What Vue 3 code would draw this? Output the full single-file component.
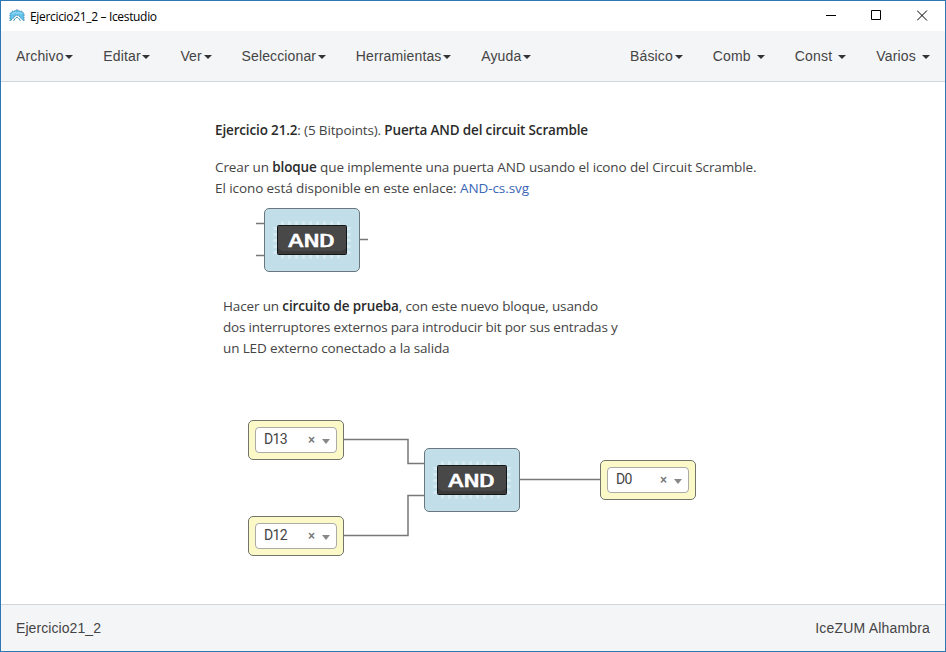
<script setup>
const leftMenus = ['Archivo', 'Editar', 'Ver', 'Seleccionar', 'Herramientas', 'Ayuda']
const rightMenus = [
  { label: 'Básico', spaced: false },
  { label: 'Comb', spaced: true },
  { label: 'Const', spaced: true },
  { label: 'Varios', spaced: true },
]
const gates = [
  { id: 'sample', x: 263, y: 126 },
  { id: 'circuit', x: 423, y: 366 },
]
const ports = [
  { pin: 'D13', x: 247, y: 338 },
  { pin: 'D12', x: 247, y: 434 },
  { pin: 'D0', x: 599, y: 378 },
]
const at = (n) => ({ left: n.x + 'px', top: n.y + 'px' })
const topPins = [9, 16, 23, 30, 37, 44, 51, 58, 65]
const sidePins = [7, 13, 19, 25, 31]
</script>

<template>
  <div class="window">
    <header class="titlebar">
      <svg class="app-icon" width="16" height="14" viewBox="0 0 16 14">
        <path d="M1 4.500 3.500 2h2L7 1h2l1.500 1h2L15 4.500V12l-3.500-3L10.500 7.500 8 6 5.500 7.500 4.500 9 1 12z" fill="#63c2ea" stroke="#4585a8" stroke-width="1" stroke-dasharray="1.500 1" />
        <path d="M3 5 6 3.500l2 1 2-1L13 5" fill="none" stroke="#a5e0f8" />
        <path d="m4.500 12 2-3M11.500 12l-2-3M7 8.500h2" stroke="#4c9fc9" />
      </svg>
      <span class="title">Ejercicio21_2 – Icestudio</span>
      <div class="controls">
        <svg width="10" height="11" viewBox="0 0 10 11"><path d="M0 5.500h10" stroke="#000" /></svg>
        <svg width="11" height="11" viewBox="0 0 11 11"><path d="M.5.5h9v9H.5z" fill="none" stroke="#000" /></svg>
        <svg width="11" height="11" viewBox="0 0 11 11"><path d="m0 .5 10 10m0-10-10 10" stroke="#000" /></svg>
      </div>
    </header>

    <nav class="menubar">
      <div class="group">
        <span v-for="m in leftMenus" :key="m" class="menu">{{ m }}<i class="caret" /></span>
      </div>
      <div class="group right">
        <span v-for="m in rightMenus" :key="m.label" class="menu" :class="{ spaced: m.spaced }">{{ m.label }}<i class="caret" /></span>
      </div>
    </nav>

    <main class="canvas">
      <svg class="wires" width="944" height="522" viewBox="0 0 944 522">
        <g fill="none" stroke="#777" stroke-width="1.500">
          <path d="M255 141.500h9M255 173.500h9M358 157.500h9" />
          <path d="M342 357.500h65v24h17M342 453.500h65v-40h17M518 397.500h82" />
        </g>
      </svg>

      <section class="note intro">
        <p class="heading"><b>Ejercicio 21.2</b>: (5 Bitpoints). <b>Puerta AND del circuit Scramble</b></p>
        <p class="summary">Crear un <b>bloque</b> que implemente una puerta AND usando el icono del Circuit Scramble.</p>
        <p class="download">El icono está disponible en este enlace: <a>AND-cs.svg</a></p>
      </section>

      <section class="note task">
        <p class="goal">Hacer un <b>circuito de prueba</b>, con este nuevo bloque, usando</p>
        <p class="inputs">dos interruptores externos para introducir bit por sus entradas y</p>
        <p class="output">un LED externo conectado a la salida</p>
      </section>

      <div v-for="g in gates" :key="g.id" class="gate" :style="at(g)">
        <svg width="80" height="40" viewBox="0 0 80 40">
          <g fill="#d6eaf1">
            <rect v-for="x in topPins" :key="'t' + x" :x="x" y="1.500" width="3" height="37" />
            <rect v-for="y in sidePins" :key="'s' + y" x="1.500" :y="y" width="77" height="3" />
          </g>
          <rect x="5.500" y="5.500" width="69" height="29" rx="1" fill="#484848" stroke="#161616" />
          <path d="M6 28c2 2.500 4 3 8 3h52c4 0 6-.5 8-3v6H6z" fill="#3b3b3b" />
          <text x="16" y="26.500" class="gate-text" textLength="47" lengthAdjust="spacingAndGlyphs">AND</text>
        </svg>
      </div>

      <div v-for="p in ports" :key="p.pin" class="port" :style="at(p)">
        <div class="select">
          <span class="pin">{{ p.pin }}</span>
          <span class="clear">×</span>
          <i class="arrow" />
        </div>
      </div>
    </main>

    <footer class="statusbar">
      <span class="project">Ejercicio21_2</span>
      <span class="board">IceZUM Alhambra</span>
    </footer>
  </div>
</template>

<style>
body { margin: 0; background: #fff; overflow: hidden; }
</style>

<style scoped>
.window {
  box-sizing: border-box;
  width: 946px;
  height: 652px;
  border: 1px solid #2c77b4;
  background: #fff;
  display: flex;
  flex-direction: column;
  font-family: "Liberation Sans", Arial, sans-serif;
  font-size: 14px;
  color: #444;
}
.titlebar {
  height: 30px;
  flex: none;
  display: flex;
  align-items: center;
  padding: 0 17px 0 8px;
}
.app-icon { margin-right: 5px; }
.title {
  font: 12px "Open Sans", sans-serif;
  letter-spacing: -0.33px;
  color: #000;
  white-space: nowrap;
}
.controls { margin-left: auto; display: flex; align-items: center; gap: 35px; margin-top: -1px; }
.controls svg { display: block; }
.menubar {
  height: 50px;
  flex: none;
  background: #f4f5f7;
  border-bottom: 1px solid #d3d6d8;
  display: flex;
  align-items: center;
  justify-content: space-between;
  padding: 0 15px;
}
.group { display: flex; gap: 30px; }
.menu { display: flex; align-items: center; letter-spacing: 0.135px; white-space: nowrap; }
.right .menu { letter-spacing: 0.18px; }
.caret {
  width: 0;
  height: 0;
  margin-left: 1.700px;
  margin-top: 2px;
  border: 4px solid transparent;
  border-top-color: #333;
  border-bottom: 0;
}
.spaced .caret { margin-left: 6px; }
.canvas { position: relative; flex: 1; overflow: hidden; }
.wires { position: absolute; left: 0; top: 0; }
.note {
  position: absolute;
  font: 13.500px/21px "Open Sans", "Noto Sans", sans-serif;
  letter-spacing: -0.14px;
  color: #444;
  white-space: nowrap;
}
.note p { margin: 0; }
.note b { font-weight: 600; color: #2b2b2b; }
.note a { color: #3a66b5; }
.intro { left: 214px; top: 38px; }
.intro .heading { margin-bottom: 16px; letter-spacing: -0.15px; }
.intro .summary { letter-spacing: -0.11px; }
.intro .download { letter-spacing: -0.08px; }
.task { left: 222px; top: 214px; }
.task .inputs { letter-spacing: -0.19px; }
.gate {
  position: absolute;
  box-sizing: border-box;
  width: 96px;
  height: 64px;
  border: 1px solid #687780;
  border-radius: 5px;
  background: #c1dee9;
  display: flex;
  align-items: center;
  justify-content: center;
}
.gate-text { font: 18px "DejaVu Sans Mono", monospace; fill: #fff; stroke: #fff; stroke-width: 0.6px; }
.port {
  position: absolute;
  box-sizing: border-box;
  width: 96px;
  height: 40px;
  border: 1px solid #74746a;
  border-radius: 5px;
  background: #fbf9c7;
  padding: 6px;
}
.select {
  box-sizing: border-box;
  height: 26px;
  border: 1px solid #aaa;
  border-radius: 4px;
  background: #fff;
  display: flex;
  align-items: center;
  padding: 0 6px 0 8px;
}
.pin { font: 14px/24px Roboto, sans-serif; letter-spacing: -0.6px; color: #444; padding-bottom: 2px; }
.clear { margin-left: auto; font: bold 12px/24px "Liberation Sans", sans-serif; color: #777; }
.arrow {
  margin-left: 7px;
  margin-top: 3px;
  border: 4px solid transparent;
  border-top: 5px solid #888;
  border-bottom: 0;
}
.statusbar {
  height: 46px;
  flex: none;
  background: #f4f5f7;
  border-top: 1px solid #d3d6d8;
  display: flex;
  align-items: center;
  justify-content: space-between;
  padding: 0 15px;
  letter-spacing: 0.08px;
}
.board { letter-spacing: 0.18px; }
</style>
